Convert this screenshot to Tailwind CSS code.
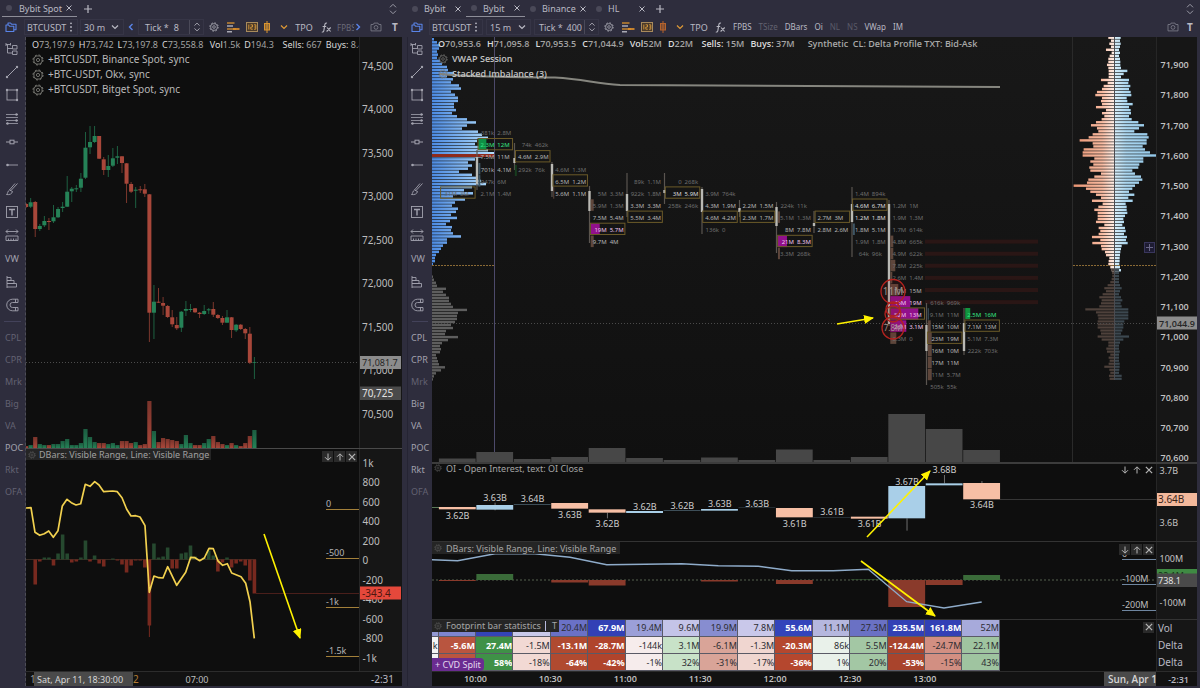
<!DOCTYPE html>
<html lang="en">
<head>
<meta charset="utf-8">
<title>BTCUSDT charts</title>
<script src="https://cdn.jsdelivr.net/npm/@tailwindcss/browser@4"></script>
</head>
<body class="h-screen overflow-hidden bg-[#2e2d3d] font-['Noto_Sans',sans-serif] text-[9px] leading-none text-[#b9b9c3]">

<svg class="absolute size-0" aria-hidden="true">
  <defs>
    <linearGradient id="blueFade" gradientUnits="userSpaceOnUse" x1="432" x2="492" y1="0" y2="0"><stop offset="0" stop-color="#4c8ae2"/><stop offset="1" stop-color="#b2ddfb"/></linearGradient>
    <linearGradient id="orangeFade" gradientUnits="userSpaceOnUse" x1="1074" x2="1114" y1="0" y2="0"><stop offset="0" stop-color="#e89473"/><stop offset="0.7" stop-color="#f8baa0"/><stop offset="1" stop-color="#ffeee6"/></linearGradient>
    <linearGradient id="skyFade" gradientUnits="userSpaceOnUse" x1="1114" x2="1155" y1="0" y2="0"><stop offset="0" stop-color="#daf0fb"/><stop offset="0.3" stop-color="#abd6ef"/><stop offset="1" stop-color="#92c7e8"/></linearGradient>
    <linearGradient id="redVol" x1="0" x2="0" y1="0" y2="1"><stop offset="0" stop-color="#7a342b"/><stop offset="1" stop-color="#a8473a"/></linearGradient>
    <linearGradient id="greenVol" x1="0" x2="0" y1="0" y2="1"><stop offset="0" stop-color="#1c5c40"/><stop offset="1" stop-color="#258257"/></linearGradient>
    <marker id="tip" markerUnits="userSpaceOnUse" markerWidth="10" markerHeight="10" refX="9" refY="4.5" orient="auto"><path d="M0 0L10 4.5L0 9Z" fill="#fff200"/></marker>
    <symbol id="i-folder" viewBox="0 0 12 12"><path d="M1 10.500V4h2.500l1 1.200h4.300v5.300zM3 4V2h2.500l1 1.200H11v5.600H9" fill="none" stroke="currentColor" stroke-width="1.100" stroke-linejoin="round"/></symbol>
    <symbol id="i-dots" viewBox="0 0 4 12"><g fill="currentColor"><circle cx="2" cy="2.300" r=".9"/><circle cx="2" cy="6" r=".9"/><circle cx="2" cy="9.700" r=".9"/></g></symbol>
    <symbol id="i-down" viewBox="0 0 8 8"><path d="M1 2.500l3 3 3-3" fill="none" stroke="currentColor" stroke-width="1.200"/></symbol>
    <symbol id="i-left" viewBox="0 0 8 8"><path d="M5.500 1l-3 3 3 3" fill="none" stroke="currentColor" stroke-width="1.400"/></symbol>
    <symbol id="i-right" viewBox="0 0 8 8"><path d="M2.500 1l3 3-3 3" fill="none" stroke="currentColor" stroke-width="1.400"/></symbol>
    <symbol id="i-spin" viewBox="0 0 8 12"><path d="M1 4.300l3-3 3 3M1 7.700l3 3 3-3" fill="none" stroke="currentColor"/></symbol>
    <symbol id="i-gear" viewBox="0 0 12 12"><circle cx="6" cy="6" r="5" fill="none" stroke="currentColor" stroke-width="1" stroke-dasharray="1.960 1.960"/><circle cx="6" cy="6" r="4.100" fill="none" stroke="currentColor" stroke-width=".8"/><circle cx="6" cy="6" r="1.600" fill="none" stroke="currentColor" stroke-width=".8"/></symbol>
    <symbol id="i-bars" viewBox="0 0 13 11"><path d="M0 1h7.500M0 7h9" stroke="#c2842f" stroke-width="1.700"/><path d="M0 4h6M0 9.800h5" stroke="#a9a9b4" stroke-width="1.500"/><path d="M6 7h6.500" stroke="#e0912c" stroke-width="1.700"/></symbol>
    <symbol id="i-nums" viewBox="0 0 12 10"><rect x=".5" y=".5" width="11" height="9" fill="#4a3a2a" stroke="#a88a5c"/><path d="M2.800 2.500v5M4.600 2.800h1.900v2.200H4.800v2.200h2M8 2.800h1.800v4.400H8M8.300 5h1.500" fill="none" stroke="#d99a3d" stroke-width=".9"/></symbol>
    <symbol id="i-candle" viewBox="0 0 8 12"><path d="M4 0v12" stroke="currentColor"/><rect x="1.500" y="2.500" width="5" height="6.500" fill="currentColor" fill-opacity=".55" stroke="currentColor"/></symbol>
    <symbol id="i-fx" viewBox="0 0 11 11"><path d="M6 1.200C4.200.6 3.900 2 3.600 4L2.900 8.400C2.700 9.800 2 10.300.8 9.900M1.600 4.500h3.600M6 5.500l3.600 4M9.700 5.500L5.600 9.500" fill="none" stroke="currentColor" stroke-width="1.100"/></symbol>
    <symbol id="i-camera" viewBox="0 0 12 10"><path d="M1 2.500h2.300L4 1.100h4l.7 1.400H11v6.400H1z" fill="none" stroke="currentColor" stroke-width=".8"/><circle cx="6" cy="5.400" r="1.900" fill="none" stroke="currentColor" stroke-width=".8"/></symbol>
    <symbol id="i-x" viewBox="0 0 8 8"><path d="M1.500 1.500l5 5M6.500 1.500l-5 5" stroke="currentColor"/></symbol>
    <symbol id="i-plus" viewBox="0 0 10 10"><path d="M5 1v8M1 5h8" stroke="currentColor" stroke-width="1.200"/></symbol>
    <symbol id="i-adown" viewBox="0 0 8 8"><path d="M4 .5v6.500M1 4.200l3 3 3-3" fill="none" stroke="currentColor"/></symbol>
    <symbol id="i-aup" viewBox="0 0 8 8"><path d="M4 7.500V1M1 3.800l3-3 3 3" fill="none" stroke="currentColor"/></symbol>
    <symbol id="t-tree" viewBox="0 0 14 14"><path d="M1 2.500h4.500M2.500 2.500v8.500h4.500M2.500 6.500h4.500M7.500 3.500h4.500v3.500H7.500zM7.500 9h4.500v3.500H7.500zM1 1v3M5.500 1v2.500" fill="none" stroke="currentColor" stroke-width=".9"/></symbol>
    <symbol id="t-line" viewBox="0 0 14 14"><path d="M2 12L12 2" stroke="currentColor"/><circle cx="2" cy="12" r="1.200" fill="currentColor"/><circle cx="12" cy="2" r="1.200" fill="currentColor"/></symbol>
    <symbol id="t-rect" viewBox="0 0 14 14"><rect x="2" y="2" width="10" height="10" fill="none" stroke="currentColor" stroke-width=".9"/><g fill="currentColor"><circle cx="2" cy="2" r="1.200"/><circle cx="12" cy="2" r="1.200"/><circle cx="12" cy="12" r="1.200"/></g></symbol>
    <symbol id="t-levels" viewBox="0 0 14 14"><path d="M1 2.500h12M1 5.500h12M1 8.500h12M1 11.500h12" stroke="currentColor" stroke-width=".8"/><g fill="currentColor"><circle cx="11.500" cy="2.500" r="1.200"/><circle cx="11.500" cy="8.500" r="1.200"/><circle cx="2.500" cy="11.500" r="1.200"/></g></symbol>
    <symbol id="t-node" viewBox="0 0 14 14"><path d="M1 7h4M9 7h4" stroke="currentColor"/><rect x="5" y="5.200" width="4" height="3.600" fill="none" stroke="currentColor"/></symbol>
    <symbol id="t-ray" viewBox="0 0 14 14"><path d="M2 7h11" stroke="currentColor" stroke-width=".9"/><circle cx="2.500" cy="7" r="1.300" fill="currentColor"/></symbol>
    <symbol id="t-brush" viewBox="0 0 14 14"><path d="M12.500 1.500L6 8.500M10 1.500L4.500 8M4.500 8l3 1.500c-.5 2.500-3 3.500-6 3 1.500-1 1-3.500 3-4.500z" fill="none" stroke="currentColor" stroke-width=".9"/></symbol>
    <symbol id="t-text" viewBox="0 0 14 14"><rect x="1.500" y="1.500" width="11" height="11" fill="none" stroke="currentColor" stroke-width=".9"/><path d="M4 4.500h6M7 4.500v6" stroke="currentColor" stroke-width="1.400"/></symbol>
    <symbol id="t-measure" viewBox="0 0 14 14"><path d="M1 3.500h12M3 1.500L1 3.500l2 2M11 1.500l2 2-2 2M1 8h12v4.500H1zM3.500 12.500v-2M6 12.500v-2M8.500 12.500v-2M11 12.500v-2" fill="none" stroke="currentColor" stroke-width=".9"/></symbol>
    <symbol id="t-hist" viewBox="0 0 14 14"><path d="M2 1v12M2 2.500h4v3H2M2 5.500h7v3H2M2 8.500h9.500v3.500H2" fill="none" stroke="currentColor" stroke-width=".9"/></symbol>
    <symbol id="t-magnet" viewBox="0 0 14 14"><path d="M13 1.200H7.500a5.800 5.800 0 0 0 0 11.600H13V9.500H7.500a2.500 2.500 0 0 1 0-5H13zM10.500 1.200v3.300M10.500 9.500v3.300" fill="none" stroke="currentColor" stroke-width=".9"/></symbol>
  </defs>
</svg>

<main class="flex h-full">

  <!-- Spot workspace -->
  <section class="flex w-[34%] min-w-0 flex-col pb-0.5" aria-label="Bybit Spot">
    <nav class="flex h-[17px] shrink-0 items-center pl-0.5 text-[9px]" aria-label="Tabs">
      <div class="flex h-full w-[75px] items-center border-b border-[#8d8d98] pl-1">
        <span class="size-1.5 rounded-full bg-[#4a4958]"></span>
        <button class="ml-[7px] whitespace-nowrap">Bybit Spot</button>
        <button class="ml-auto mr-1" aria-label="Close tab"><svg class="size-2"><use href="#i-x"/></svg></button>
      </div>
      <button class="ml-1.5" aria-label="New tab"><svg class="size-2.5"><use href="#i-plus"/></svg></button>
      <button class="ml-auto mr-[11px] text-[#9a9aa6]" aria-label="Expand"><svg class="h-3 w-2"><use href="#i-spin"/></svg></button>
    </nav>
    <div class="flex h-5 shrink-0 items-center pr-1.5">
      <button class="flex w-[22px] justify-center text-[#5a84e8]" aria-label="Open layout"><svg class="size-3"><use href="#i-folder"/></svg></button>
      <button class="ml-0.5 flex h-4 w-[54px] items-center justify-between border border-[#363546] px-0.5 pr-1">BTCUSDT<svg class="h-3 w-1"><use href="#i-dots"/></svg></button>
      <label class="relative ml-0.5 flex h-4 w-11 items-center border border-[#363546]"><select class="w-full appearance-none bg-transparent pl-[3px] outline-none" aria-label="Interval"><option>30 m</option></select><svg class="pointer-events-none absolute right-1 size-2"><use href="#i-down"/></svg></label>
      <button class="flex w-3.5 justify-center text-[#5a84e8]" aria-label="Scroll left"><svg class="size-2"><use href="#i-left"/></svg></button>
      <div class="flex h-4 w-[66px] items-center border border-[#363546]"><label for="tickA" class="whitespace-nowrap pl-1.5">Tick *</label><input id="tickA" value="8" class="h-full w-0 flex-1 bg-transparent pr-[10px] text-right outline-none"><button class="flex h-full w-3.5 items-center justify-center border-l border-[#4a4958]" aria-label="Step"><svg class="h-2.5 w-2"><use href="#i-spin"/></svg></button></div>
      <button class="flex w-5 justify-center" aria-label="Settings"><svg class="size-2.5"><use href="#i-gear"/></svg></button>
      <button class="flex w-[18px] justify-center" aria-label="Profile"><svg class="h-[11px] w-[13px]"><use href="#i-bars"/></svg></button>
      <button class="flex w-[19px] justify-center" aria-label="Cluster numbers"><svg class="h-2.5 w-3"><use href="#i-nums"/></svg></button>
      <button class="flex w-3 justify-center text-[#d99430]" aria-label="Candles"><svg class="h-3 w-2"><use href="#i-candle"/></svg></button>
      <button class="ml-[3px] flex w-4 justify-center text-[#e09a35]" aria-label="Chart type"><svg class="size-2"><use href="#i-down"/></svg></button>
      <button class="ml-0.5 w-5">TPO</button>
      <button class="ml-[5px] flex w-3.5 justify-center" aria-label="Indicators"><svg class="size-[11px]"><use href="#i-fx"/></svg></button>
      <span class="ml-1 w-0 flex-1 overflow-hidden"><button class="whitespace-nowrap text-[8px] text-[#6a6a78]">FPBS</button></span>
      <button class="flex w-2 justify-center text-[#5a84e8]" aria-label="Scroll right"><svg class="size-2"><use href="#i-right"/></svg></button>
      <button class="ml-1.5 flex w-4 justify-center text-[#80808d]" aria-label="Screenshot"><svg class="h-2.5 w-3"><use href="#i-camera"/></svg></button>
      <button class="ml-1 w-3.5 text-[10px] font-bold">T</button>
    </div>

    <div class="flex min-h-0 flex-1">
      <div class="w-[26px] shrink-0 border-r border-dashed border-[#4d4d56] text-[#a2a2ae]" data-tools="6"></div>
      <div class="flex min-w-0 flex-1 flex-col bg-[#0e0e0e]">
        <div class="flex min-h-0 flex-[411]">
          <div class="relative min-w-0 flex-1 overflow-hidden">
            <svg id="spotPlot" class="absolute inset-0 size-full"></svg>
            <div class="relative pl-1.5 pt-px text-[10px] text-[#b9b9b9]">
              <p class="flex gap-1 whitespace-nowrap text-[9px] leading-[14px]" data-ohlc="O 73,197.9|H 73,742|L 73,197.8|C 73,558.8|&#160;Vol 1.5k|D 194.3|&#160;&#160;Sells: &#160;667|Buys: &#160;8.4k"></p>
              <div class="flex items-center gap-1 leading-[15px]"><button aria-label="Settings"><svg class="size-3 text-[#85857f]"><use href="#i-gear"/></svg></button>+BTCUSDT, Binance Spot, sync</div>
              <div class="flex items-center gap-1 leading-[15px]"><button aria-label="Settings"><svg class="size-3 text-[#85857f]"><use href="#i-gear"/></svg></button>+BTC-USDT, Okx, sync</div>
              <div class="flex items-center gap-1 leading-[15px]"><button aria-label="Settings"><svg class="size-3 text-[#85857f]"><use href="#i-gear"/></svg></button>+BTCUSDT, Bitget Spot, sync</div>
            </div>
          </div>
          <div class="w-[43px] overflow-hidden border-l border-[#262626] bg-[#161616]"><svg id="spotAxis" class="size-full"></svg></div>
        </div>
        <div class="flex min-h-0 flex-[222] border-t border-[#4a4a4a]">
          <div class="relative min-w-0 flex-1 overflow-hidden">
            <svg id="spotDelta" class="absolute inset-0 size-full"></svg>
            <div class="absolute left-0 top-0 flex h-[11px] items-center gap-[3px] bg-[#252525] pl-0.5 pr-0.5 text-[#a0a0a0]"><svg class="size-2 text-[#5c5c5c]"><use href="#i-gear"/></svg>DBars: Visible Range, Line: Visible Range</div>
            <div class="absolute right-0.5 top-0.5 flex gap-px text-[#b5b5b5]" data-panebtns="3"></div>
          </div>
          <div class="w-[43px] overflow-hidden border-l border-[#262626] bg-[#161616]"><svg id="spotDeltaAxis" class="size-full"></svg></div>
        </div>
        <div class="flex h-[15px] shrink-0 border-t border-[#2c2c2c] bg-[#121212]">
          <div class="min-w-0 flex-1"><svg id="spotTime" class="size-full"></svg></div>
          <div class="w-[43px] pr-2 text-right text-[10px] leading-[15px]">-2:31</div>
        </div>
      </div>
      <div class="w-1.5 shrink-0 border-r border-[#252433]"></div>
    </div>
  </section>

  <!-- Futures workspace -->
  <section class="flex min-w-0 flex-1 flex-col pb-0.5" aria-label="Bybit">
    <nav class="flex h-[17px] shrink-0 items-center text-[9px]" aria-label="Tabs">
      <div class="flex h-full w-[58px] items-center pl-1">
        <span class="size-1.5 rounded-full bg-[#4a4958]"></span>
        <button class="ml-1.5">Bybit</button>
        <button class="ml-auto mr-1" aria-label="Close tab"><svg class="size-2"><use href="#i-x"/></svg></button>
      </div>
      <div class="flex h-full w-[59px] items-center border-b border-[#8d8d98] pl-[5px]">
        <span class="size-1.5 rounded-full bg-[#4a4958]"></span>
        <button class="ml-1.5">Bybit</button>
        <button class="ml-auto mr-1" aria-label="Close tab"><svg class="size-2"><use href="#i-x"/></svg></button>
      </div>
      <div class="flex h-full w-[66px] items-center pl-[5px]">
        <span class="size-1.5 rounded-full bg-[#4a4958]"></span>
        <button class="ml-1.5">Binance</button>
        <button class="ml-auto mr-1" aria-label="Close tab"><svg class="size-2"><use href="#i-x"/></svg></button>
      </div>
      <div class="flex h-full w-[55px] items-center pl-[5px]">
        <span class="size-1.5 rounded-full bg-[#4a4958]"></span>
        <button class="ml-1.5">HL</button>
        <button class="ml-auto" aria-label="Close tab"><svg class="size-2"><use href="#i-x"/></svg></button>
      </div>
      <button class="ml-[9px]" aria-label="New tab"><svg class="size-2.5"><use href="#i-plus"/></svg></button>
      <button class="ml-auto mr-1.5 text-[#9a9aa6]" aria-label="Expand"><svg class="h-3 w-2"><use href="#i-spin"/></svg></button>
    </nav>
    <div class="flex h-5 shrink-0 items-center pr-1">
      <button class="flex w-[18px] justify-center text-[#5a84e8]" aria-label="Open layout"><svg class="size-3"><use href="#i-folder"/></svg></button>
      <button class="ml-[3px] flex h-4 w-[54px] items-center justify-between border border-[#363546] px-0.5 pr-1">BTCUSDT<svg class="h-3 w-1"><use href="#i-dots"/></svg></button>
      <label class="relative ml-[3px] flex h-4 w-[45px] items-center border border-[#363546]"><select class="w-full appearance-none bg-transparent pl-[3px] outline-none" aria-label="Interval"><option>15 m</option></select><svg class="pointer-events-none absolute right-1 size-2"><use href="#i-down"/></svg></label>
      <div class="ml-[3px] flex h-4 w-[65px] items-center border border-[#363546]"><label for="tickB" class="whitespace-nowrap pl-1">Tick *</label><input id="tickB" value="400" class="h-full w-0 flex-1 bg-transparent pr-0.5 text-right outline-none"><button class="flex h-full w-3.5 items-center justify-center border-l border-[#4a4958]" aria-label="Step"><svg class="h-2.5 w-2"><use href="#i-spin"/></svg></button></div>
      <button class="flex w-5 justify-center" aria-label="Settings"><svg class="size-2.5"><use href="#i-gear"/></svg></button>
      <button class="flex w-[18px] justify-center" aria-label="Profile"><svg class="h-[11px] w-[13px]"><use href="#i-bars"/></svg></button>
      <button class="flex w-[19px] justify-center" aria-label="Cluster numbers"><svg class="h-2.5 w-3"><use href="#i-nums"/></svg></button>
      <button class="flex w-3.5 justify-center text-[#b5632c]" aria-label="Candles"><svg class="h-3 w-2"><use href="#i-candle"/></svg></button>
      <button class="ml-0.5 flex w-4 justify-center text-[#e09a35]" aria-label="Chart type"><svg class="size-2"><use href="#i-down"/></svg></button>
      <button class="ml-px w-5">TPO</button>
      <button class="ml-1 flex w-3.5 justify-center" aria-label="Indicators"><svg class="size-[11px]"><use href="#i-fx"/></svg></button>
      <div class="ml-1.5 flex flex-1 items-center gap-[7px] whitespace-nowrap text-[8px]">
        <button>FPBS</button><button class="text-[#626270]">TSize</button><button>DBars</button><button>Oi</button><button class="text-[#5a5a68]">NL</button><button class="text-[#5a5a68]">NS</button><button>VWap</button><button>IM</button>
      </div>
      <button class="flex w-4 justify-center text-[#80808d]" aria-label="Screenshot"><svg class="h-2.5 w-3"><use href="#i-camera"/></svg></button>
      <button class="ml-[3px] w-3 text-[10px] font-bold">T</button>
    </div>

    <div class="flex min-h-0 flex-1">
      <div class="w-6 shrink-0 text-[#a2a2ae]" data-tools="7"></div>
      <div class="flex min-w-0 flex-1 flex-col bg-[#0e0e0e] font-['Open_Sans',sans-serif] font-semibold">
        <div class="flex min-h-0 flex-[425] bg-linear-to-b from-[#181818] to-[#101010]">
          <div class="relative min-w-0 flex-1 overflow-hidden">
            <svg id="futPlot" class="absolute inset-0 size-full font-['Noto_Sans',sans-serif] font-normal"></svg>
            <div class="relative pl-1.5 text-[#c4c4c4]">
              <p class="flex gap-1.5 whitespace-nowrap text-[9px] leading-[14px]" data-ohlc="O 70,953.6|H 71,095.8|L 70,953.5|C 71,044.9|Vol 52M|D 22M|&#160;Sells: &#160;15M|Buys: &#160;37M|&#160; &#160;Synthetic&#160; CL: Delta Profile TXT: Bid-Ask"></p>
              <div class="flex items-center gap-1 leading-[15px]"><button aria-label="Settings"><svg class="size-2.5 text-[#7c7c78]"><use href="#i-gear"/></svg></button>VWAP Session</div>
              <div class="flex items-center gap-1 leading-[15px]"><button aria-label="Settings"><svg class="size-2.5 text-[#7c7c78]"><use href="#i-gear"/></svg></button>Stacked Imbalance (3)</div>
            </div>
          </div>
          <div class="relative w-[84px] shrink-0 border-l border-[#2a2a2a]">
            <svg id="futProfile" class="absolute inset-0 size-full"></svg>
          </div>
          <div class="w-[41px] overflow-hidden border-l border-[#262626] bg-[#161616]"><svg id="futAxis" class="size-full"></svg></div>
        </div>
        <div class="flex min-h-0 flex-[77] border-t-2 border-[#3c3c3c] font-['Noto_Sans',sans-serif] font-normal">
          <div class="relative min-w-0 flex-1 overflow-hidden">
            <svg id="oiPlot" class="absolute inset-0 size-full"></svg>
            <div class="absolute left-0 top-0 flex h-2 items-center gap-1 pl-0.5 text-[#a5a5a5]"><svg class="size-2 text-[#5c5c5c]"><use href="#i-gear"/></svg>OI - Open Interest, text: OI Close</div>
            <div class="absolute right-0.5 top-0 flex gap-px text-[#b5b5b5]" data-panebtns="3" data-plain></div>
          </div>
          <div class="w-[41px] overflow-hidden border-l border-[#262626] bg-[#161616]"><svg id="oiAxis" class="size-full"></svg></div>
        </div>
        <div class="flex min-h-0 flex-[76] border-t border-[#333] font-['Noto_Sans',sans-serif] font-normal">
          <div class="relative min-w-0 flex-1 overflow-hidden">
            <svg id="deltaPlot" class="absolute inset-0 size-full"></svg>
            <div class="absolute left-0 top-0 flex h-3 items-center gap-1 bg-[#252525] pl-0.5 pr-1 text-[#a5a5a5]"><svg class="size-2 text-[#5c5c5c]"><use href="#i-gear"/></svg>DBars: Visible Range, Line: Visible Range</div>
            <div class="absolute right-0.5 top-0.5 flex gap-px text-[#b5b5b5]" data-panebtns="3"></div>
          </div>
          <div class="w-[41px] overflow-hidden border-l border-[#262626] bg-[#161616]"><svg id="deltaAxis" class="size-full"></svg></div>
        </div>
        <div class="flex shrink-0 border-t border-[#333] font-['Noto_Sans',sans-serif] font-normal">
          <div class="relative min-w-0 flex-1 overflow-hidden">
            <table id="stats" class="w-[568px] table-fixed border-collapse text-right" aria-label="Footprint bar statistics"></table>
            <div class="absolute left-0 top-0 flex h-3 items-center gap-1 bg-[#252525] pl-0.5 text-[#a5a5a5]"><svg class="size-2 text-[#5c5c5c]"><use href="#i-gear"/></svg>Footprint bar statistics<span class="h-2.5 w-px bg-[#b9b9dd]"></span><button class="px-0.5">T</button></div>
            <button class="absolute bottom-0 left-0 h-[13px] rounded-r-sm bg-[#6a2c91] px-[3px] text-[#e4d9ee]">+ CVD Split</button>
            <div class="absolute right-0.5 top-0.5 flex text-[#b5b5b5]" data-panebtns="1"></div>
          </div>
          <div class="flex w-[41px] flex-col justify-around border-l border-[#262626] bg-[#161616] pl-px text-[10px]"><span>Vol</span><span>Delta</span><span>Delta</span></div>
        </div>
        <div class="flex h-[15px] shrink-0 border-t border-[#2c2c2c] bg-[#121212]">
          <div class="relative min-w-0 flex-1 overflow-hidden"><svg id="futTime" class="absolute inset-0 size-full"></svg><span class="absolute right-0 top-0 h-full w-[52px] overflow-hidden whitespace-nowrap bg-[#4a4a4a] pl-1 text-[10px] leading-[14px] text-[#d5d5d5]">Sun, Apr 1</span></div>
          <div class="w-[41px] pr-2 text-right leading-[15px]">-2:31</div>
        </div>
      </div>
      <div class="w-[3px] shrink-0"></div>
    </div>
  </section>
</main>

<script>
const $ = id => document.getElementById(id);
const rect = (x, y, w, h, fill, more = '') => `<rect x="${x}" y="${y}" width="${w}" height="${h}" fill="${fill}" ${more}/>`;
const line = (x1, y1, x2, y2, stroke, more = '') => `<line x1="${x1}" y1="${y1}" x2="${x2}" y2="${y2}" stroke="${stroke}" ${more}/>`;
const text = (x, y, s, fill, size = 9, more = '') => `<text x="${x}" y="${y}" fill="${fill}" font-size="${size}" ${more}>${s}</text>`;
const arrow = (x1, y1, x2, y2) => line(x1, y1, x2, y2, '#fff200', 'stroke-width="1.6" marker-end="url(#tip)"');
const tag = (x, y, w, h, bg, s, fill, size = 9) => rect(x, y, w, h, bg) + text(x + 3, y + h / 2 + 3.500, s, fill, size);
// Every plot is drawn in workspace coordinates; ox/oy is the pane's origin.
const put = (id, ox, oy, body) => { $(id).innerHTML = `<g transform="translate(${-ox} ${-oy})">${body}</g>`; };
const MID = 'text-anchor="middle"';

/* Drawing tools */
const tools = ['tree:Objects', 'line:Line', 'rect:Rectangle', 'levels:Levels', 'node:Segment', 'ray:Ray', 'brush:Brush', 'text:Text', 'measure:Measure', 'VW', 'hist:Profile', 'magnet:Magnet'];
const marks = ['CPL', 'CPR', 'Mrk', 'Big', 'VA', 'POC', 'Rkt', 'OFA'];
document.querySelectorAll('[data-tools]').forEach(host => {
  const spot = host.dataset.tools === '6';
  const on = spot ? ['POC'] : ['CPL', 'CPR', 'Big', 'VA', 'POC', 'Rkt'];
  host.innerHTML = '<div class="flex h-[280px] flex-col">' + tools.map(t => {
    const [icon, name] = t.split(':');
    return name
      ? `<button class="flex w-full flex-1 items-center justify-center ${spot ? 'pr-0.5' : 'pr-1.5'}" aria-label="${name}"><svg class="size-3.5"><use href="#t-${icon}"/></svg></button>`
      : `<button class="w-full flex-1 text-left text-[9px] ${spot ? 'pl-[5px]' : 'pl-[3px]'}">${t}</button>`;
  }).join('') + '</div><div class="mx-1 mb-1 mt-1 h-px bg-[#43425a]"></div>' +
  marks.map(m => `<button class="block h-[22px] w-full text-left text-[9px] ${spot ? 'pl-[5px]' : 'pl-[3px]'} ${on.includes(m) ? '' : 'text-[#636272]'}">${m}</button>`).join('');
});
document.querySelectorAll('[data-panebtns]').forEach(host => {
  const list = host.dataset.panebtns === '1' ? [['x', 'Close']] : [['adown', 'Move down'], ['aup', 'Move up'], ['x', 'Close']];
  const bg = 'plain' in host.dataset ? '' : 'bg-[#2a2a2a]';
  host.innerHTML = list.map(([i, n]) => `<button class="flex size-[11px] items-center justify-center ${bg}" aria-label="${n}"><svg class="${i === 'x' ? 'size-2.5' : 'size-2'}"><use href="#i-${i}"/></svg></button>`).join('');
});
document.querySelectorAll('[data-ohlc]').forEach(p => {
  p.innerHTML = p.dataset.ohlc.split('|').map(part => {
    const cut = part.lastIndexOf(' ');
    const value = part.slice(cut + 1);
    return value === 'Bid-Ask' ? `<span class="text-[#a9a9a9]">${part}</span>` : `<span><span class="text-[#dadada]">${part.slice(0, cut)}</span><span class="text-[#a3a3a3]">${value}</span></span>`;
  }).join('');
});

/* Spot candles: [colour, high, top, bottom, low] */
const R = '#a8473a', G = '#258257';
const candles = [
['r',203,204,207,208],['g',198,202.300,206.700,208],['r',201,202,229,237],['g',224,226,229,231],['g',216,221,225.300,227],['r',218,221,222,230],['g',205,217.300,221.300,223],['g',207,209,217.300,218],['g',202,206.700,208,212],['g',176,191.700,206.700,207],['g',187,188.700,191.300,202],['g',185,188.300,189.300,192],['g',173,178.700,187.700,192],['g',132,147.700,177.700,179],['g',126,142,147.300,154],['g',126,136,142,143],['r',136,136,158.700,159],['r',157,159.300,170,175],['g',155,166,170,177],['g',148,158.300,165.700,167],['g',146,156.300,157.700,164],['r',156,156.300,163,173],['r',163,163.300,183.700,203],['r',182,184,191.700,193],['g',187,189.700,190.700,208],['r',186,189.300,190.300,193],['r',184,189.300,193.700,197],['r',194,194.300,312.700,342],['g',285,301.700,312.700,339],['r',288,301.700,302.700,303],['r',297,303,305.700,315],['r',305,306,317,318],['r',310,317.300,324.300,327],['r',317,325,328.300,330],['g',311,311.700,327.700,332],['g',301,309,310.700,316],['g',304,309,310,312],['r',308,308.300,312.300,313],['r',312,312.700,314,318],['g',305,311,314,315],['g',308,309.300,310.300,314],['r',302,309,314.700,317],['r',314,315,318,319],['r',316,318,322.700,325],['g',310,317.300,322.700,323],['r',317,317.300,330,338],['g',324,324.700,330.300,332],['r',324,324.700,329,330],['r',328,329,333.300,339],['r',327,333.700,362.700,364],['g',357,362,362.700,379]];
const step = 4.566, cx = i => 26.100 + step * i;
const vol = [2,3,11,4,3,3,4,4,7,9,3,3,5,19,11,6,5,5,4,5,3,7,7,5,6,3,4,47,17,6,10,9,8,7,4,13,5,3,3,5,9,12,6,4,3,5,3,2,5,12,18];
let s = line(26, 362.500, 359, 362.500, '#4c4c4c', 'stroke-dasharray="1 2"');
candles.forEach(([c, h, t, b, l], i) => {
  const x = cx(i), col = c === 'r' ? R : G;
  s += line(x, h, x, l, col, 'stroke-width=".9" opacity=".8"') + rect(x - 2, t, 4, b - t, col);
  s += rect(x - 2.100, 448 - vol[i], 4.200, vol[i], c === 'r' ? 'url(#redVol)' : 'url(#greenVol)');
});
put('spotPlot', 26, 37, s);

const ax = '#bdbdbd';
s = '';
for (let k = 0; k < 9; k++) s += text(362, 69.500 + 43.500 * k, (74500 - 500 * k).toLocaleString('en-US'), ax, 10);
s += tag(359, 356, 42, 13, '#8c8c8c', '71,081.7', '#262626') + tag(359, 386.500, 42, 13.500, '#4a4a4a', '70,725', '#e2e2e2', 10);
put('spotAxis', 360, 37, s);

const dl = { 3:-25,4:-2,5:2,6:2,7:-6,8:6,9:25,10:6,11:-3,12:-2,13:2,14:19,15:-2,16:4,17:-4,18:-7,20:1,21:-1,22:-5,23:-13,24:-6,25:-1,26:-1,27:-8,28:-66,29:16,30:2,31:3,32:12,33:-9,34:-9,35:6,36:7,37:14,38:3,39:-1,40:2,41:9,42:4,43:-12,44:-3,45:2,46:-8,47:-4,48:-2,49:-6,50:-21,51:-34 };
s = line(26, 559.500, 256, 559.500, '#3a2a22') + line(256, 593.500, 359, 593.500, '#4a1f1b');
for (const k in dl) {
  const i = k - 1, v = dl[k], x = cx(i);
  s += rect(x - 1.800, v > 0 ? 559.500 - v : 559.500, 3.600, Math.abs(v), v > 0 ? '#26492f' : '#77291f');
}
s += line(cx(27), 625, cx(27), 637, '#77291f');
const pts = [78,204,93,203,105,277,119,286,133,281,146,273,160,292,174,272,187,198,201,178,214,188,228,195,242,191,256,133,270,139,284,125,297,135,311,155,338,153,352,155,366,173,380,208,393,228,407,227,420,231,435,257,448,457,462,408,476,413,489,414,503,380,530,436,557,397,572,352,585,353,599,362,613,354,627,325,640,326,654,363,668,376,682,371,695,399,723,410,737,430,750,485,763,595];
const poly = (p, dx, dy) => p.map((v, i) => (v / 3 + (i % 2 ? dy : dx)).toFixed(1)).join(' ');
s += `<polyline points="${poly(pts, 0, 440)}" fill="none" stroke="#f2d14f" stroke-width="1.7" stroke-linejoin="round"/>`;
[['0', 509.500], ['-500', 558.500], ['-1k', 607.500], ['-1.5k', 656.500]].forEach(([t, y]) => { s += line(326, y, 359, y, '#a3803a') + text(326, y - 2.500, t, '#b5b5b5', 9); });
s += arrow(264, 534, 300, 638);
put('spotDelta', 26, 449, s);
s = '';
['1k', 800, 600, 400, 200, 0, -200, -400, -600, -800, '-1k'].forEach((t, k) => { s += text(362.500, 466.500 + 19.500 * k, t, ax, 10); });
s += tag(359, 586.500, 42, 13, '#e5483b', '-343.4', '#4d1510', 10);
put('spotDeltaAxis', 360, 449, s);
put('spotTime', 26, 672, text(30, 683, '1', '#999', 10) + text(133, 683, '2', '#b57d34', 10) + rect(34, 672, 99, 14, '#4a4a4a') + text(37, 683, 'Sat, Apr 11, 18:30:00', '#d5d5d5', 9) + text(197, 683, '07:00', '#bdbdbd', 9, MID));

/* Futures columns */
const W = 37.450, col = c => 438.900 + W * c;
const rowY = r => 132.700 + 12.100 * r;
const blue = [2,5,8,7,5,6,5,8,10,15,16,22,15,21,19,27,29,19,23,26,26,22,22,24,20,25,35,44,35,30,46,50,56,45,43,48,56,62,50,43,36,40,36,27,40,45,49,54,40,32,41,21,33,23,20,26,24,19,25,18,14,20,19,21,29,15,15,11,9,7,4,3,3,1];
const greyP = [1,2,4,5,14,11,14,17,17,19,21,35,26,25,25,23,19,21,14,13,26,16,10,8,9,8,4,5,6,7,13,9,4,2,1];
s = '';
const bs = 228 / blue.length;
blue.forEach((v, i) => { s += rect(432, (38 + bs * i).toFixed(2), v, 2.500, 'url(#blueFade)'); });
s += rect(432, 154, 62, 3, '#8e2a1c');
greyP.forEach((v, i) => { s += rect(432, (275.500 + 3.020 * i).toFixed(2), v, 2.400, '#5e5e5e'); });
s += line(494.500, 37, 494.500, 462, '#4d4a6b') + line(432, 265.500, 494, 265.500, '#8a6a35', 'stroke-dasharray="2 1"') + line(432, 323.500, 1072, 323.500, '#4a4a4a', 'stroke-dasharray="1 2"');
s += '<path d="M440 74C470 77 500 77 555 77.500C585 79 595 84 620 85C700 86 800 87 1000 87" fill="none" stroke="#86867f" stroke-width="2"/>';
[3.500,10,3,5,14,4,2,4.500,2,12.500,2,5,48,33,12].forEach((h, c) => { s += rect(col(c), 462 - h, W - .7, h, '#474747'); });
for (let r = 9; r < 15; r++) s += rect(925, rowY(r) - 2, 113, 4, '#2a1615');
/* bar bodies: [x, wickTop, top, bottom, wickBottom] */
[[477,150,157,184,190],[514.500,143,158,163,170],[552,162,164,191,197],[589.500,186,191,211,243],[627,173,194,211,217],[664.500,173,190,193,204],[702,187,189,212,234],[739.500,200,208,212,217],[776.500,202,207,226,253],[814,211,223,226,233],[852,187,204,222,257],[889,200,204,324,326],[926.500,303,325,351,385],[964,308,323,351,355]].forEach(([x, a, t, b, z]) => {
  s += line(x, a, x, z, '#5a5550', 'stroke-width="1.2"') + rect(x - 1.200, t, 2.400, b - t, '#b9b9b4');
});
/* delta profile stubs: [col, row, width, colour] */
[[4,6,3],[4,9,3],[9,7,2],[9,10,2],[3,5,1],[12,9,3],[12,10,3],[12,11,5],[12,12,2],[12,13,8],[12,17,6],[13,16,3],[13,17,4],[13,18,4],[13,19,4],[13,20,4]].forEach(([c, r, w]) => { s += rect(col(c) + 2, rowY(r) - 6, w, 11.500, '#5e463b'); });
[[1,3,2],[1,4,2],[11,8,2],[13,15,1]].forEach(([c, r, w]) => { s += rect(col(c) + 2, rowY(r) - 6, w, 11.500, '#3e5563'); });
[[4,8,9],[9,9,9],[12,14,20],[12,15,28],[12,16,16]].forEach(([c, r, w]) => { s += rect(col(c) + 2, rowY(r) - 6, w, 11.500, '#92108c'); });
s += rect(col(1) + 2, 139, 8, 11, '#0f8f45') + rect(col(14) + 2, 308, 5, 11, '#12943f') + rect(col(2) + 1, 165, 2, 11, '#173d1f');
/* cells: column, row, bid, ask, tone (d dim, m mid, b bright, g green, p pink), x boxed */
const tone = { d: '#6e6e6e', m: '#b4b4b4', b: '#dcdcdc', g: '#36e685', p: '#f0c6ef' };
`1 0 381k 2.8M d|1 1 2.3M 12M gx|1 2 7.5M 11M m|1 3 701k 4.1M m|1 4 947k 6M d|1 5 2.1M 1.4M d|0 5 31M 3M dx|2 1 74k 462k d|2 2 4.6M 2.9M mx|2 3 292k 76k d|3 3 4.6M 1.3M d|3 4 6.5M 1.2M mx|3 5 5.6M 1.1M m|4 5 5M 3.3M d|4 6 5.9M 1.3M d|4 7 7.5M 5.4M m|4 8 19M 5.7M px|4 9 9.7M 4M m|5 4 89k 1.1M d|5 5 922k 1.8M d|5 6 3.3M 3.3M m|5 7 5.5M 3.4M mx|6 4 0 268k d|6 5 3M 5.9M bx|6 6 258k 246k d|7 5 3.9M 764k d|7 6 4.3M 1.9M m|7 7 4.6M 4.2M mx|7 8 136k 0 d|8 6 2.2M 1.5M m|8 7 2.3M 1.7M mx|9 6 224k 11k d|9 7 5.1M 1.3M d|9 8 8M 7.8M m|9 9 21M 8.3M px|9 10 3.3M 268k d|10 7 2.7M 3M mx|10 8 2.8M 2.6M m|11 5 1.4M 894k d|11 6 4.6M 6.7M bx|11 7 1.2M 1.8M b|11 8 1.8M 5.1M m|11 9 1.9M 1.8M d|11 10 64k 96k d|12 6 1.2M 1M d|12 7 1.9M 1.3M d|12 8 1.7M 614k d|12 9 4.8M 665k d|12 10 4.9M 622k d|12 11 7.8M 225k d|12 12 2.6M 1.4M d|12 13 11M 15M m|12 14 45M 19M p|12 15 52M 13M px|12 16 26M 3.1M p|12 17 8.3M 0 d|13 14 616k 969k d|13 15 9.1M 11M d|13 16 15M 10M m|13 17 23M 19M mx|13 18 16M 10M m|13 19 17M 11M m|13 20 11M 5.7M d|13 21 505k 55k d|14 15 2.5M 16M g|14 16 7.1M 13M mx|14 17 5.1M 7.3M d|14 18 222k 703k d`.split('|').forEach(row => {
  const [c, r, a, b, k] = row.split(' '), x = col(+c), y = rowY(+r), f = tone[k[0]];
  if (k[1]) s += rect(x + 1.700, y - 6.300, 34.500, 11.300, 'none', 'stroke="#6b5a28" stroke-width="1"');
  s += text(x + 18, y + 2.500, a, f, 6, 'text-anchor="end"') + text(x + 21, y + 2.500, b, f, 6);
});
[[893,291.500,12],[893,309,7],[893,314,8],[893,328,11]].forEach(([x, y, r]) => { s += `<circle cx="${x}" cy="${y}" r="${r}" fill="#8a1a1a" fill-opacity=".12" stroke="#b3231f" stroke-width="1.3"/>`; });
s += text(893, 295, '11M', '#a0938c', 10, MID) + text(893, 331, '7.8M', '#a0938c', 8, MID) + arrow(837, 324, 873, 318);
put('futPlot', 432, 37, s);

/* Two-sided profile, lengths in thirds of a pixel: left, right */
const prof = [18,17,10,15,15,17,10,15,25,12,8,15,14,12,18,15,18,16,22,16,18,18,17,37,17,26,17,18,40,42,20,40,32,46,37,42,52,47,57,49,37,35,40,37,37,53,55,42,25,47,37,48,30,42,38,50,55,70,70,87,52,72,48,58,65,97,77,101,104,95,65,95,63,83,92,90,95,105,95,124,60,85,72,85,63,73,75,70,72,52,40,60,60,78,78,82,82,72,122,60,85,52,72,42,55,58,40,40,67,53,35,32,48,35,60,35,50,37,50,30,50,25,55,27,30,22,47,30,42,32,47,27,67,36,42,33,66,38,40,20,38,18,28,16,25,15,15,14,17,14,18,13,12,15,8,18];
const dark = [8,12,7,12,6,12,8,12,12,12,20,15,30,20,25,15,35,12,45,18,38,22,40,17,45,20,87,40,55,40,50,40,48,40,50,28,50,25,50,25,42,22,40,18,50,42,38,25,18,15,18,12,24,12,22,14,12,12,17,12,14,12,17,14,30,14,15,13,12,12,16,20,14,20];
s = '';
for (let i = 0; i < prof.length; i += 2) {
  const y = (36.500 + 3.020 * i / 2).toFixed(2), l = prof[i] / 3, r = prof[i + 1] / 3;
  s += rect(1114.300 - l, y, l, 2.400, 'url(#orangeFade)') + rect(1115, y, r, 2.400, 'url(#skyFade)');
}
for (let i = 0; i < dark.length; i += 2) {
  const y = (269 + 3.020 * i / 2).toFixed(2), l = dark[i] / 3, r = dark[i + 1] / 3;
  s += rect(1114.300 - l, y, l, 2.200, '#4e413b') + rect(1115, y, r, 2.200, '#3c4850');
}
s += line(1114.500, 37, 1114.500, 380, '#4b4b50') + line(1073, 265.500, 1156, 265.500, '#8a6a35', 'stroke-dasharray="2 1"') + line(1073, 323.500, 1156, 323.500, '#4a4a4a', 'stroke-dasharray="1 2"');
s += rect(1144.500, 242.500, 10, 10, '#1e1c33', 'stroke="#39365c"') + line(1146, 247.500, 1153, 247.500, '#6a6788') + line(1149.500, 244, 1149.500, 251, '#6a6788');
put('futProfile', 1073, 37, s);

s = '';
for (let k = 0; k < 14; k++) s += text(1159.500, 68 + 30.250 * k, (71900 - 100 * k).toLocaleString('en-US'), '#c4c4c4', 9);
s += tag(1155, 316.500, 42, 13, '#8c8c8c', '71,044.9', '#262626');
put('futAxis', 1156, 37, s);

/* Open interest: [up, top, bottom, wickTop, wickBottom, label, labelY] in thirds from y=455 */
s = line(1000, 499.500, 1156, 499.500, '#363636') + line(432, 507.500, 439, 507.500, '#5b7a58');
[[0,156,163,0,0,'3.62B',182],[1,150,164,143,166,'3.63B',127],[1,147,149,0,0,'3.64B',131],[0,144,161,0,0,'3.63B',178],[0,163,173,0,190,'3.62B',207],[1,168,174,0,0,'3.62B',154],[1,165,167,0,0,'3.62B',152],[1,162,167,0,0,'3.63B',145],[1,157,158,0,0,'3.63B',145],[0,159,187,0,0,'3.61B',205],[1,186,187,0,0,'3.61B',171],[0,185,191,0,0,'3.61B',206],[1,93,190,0,227,'3.67B',79],[1,85,91,60,0,'3.68B',43],[0,84,133,78,0,'3.64B',150]].forEach(([up, t, b, wt, wb, lab, ly], c) => {
  const m = col(c) + W / 2, Y = v => 455 + v / 3;
  if (wt || wb) s += line(m, Y(wt || b), m, Y(wb || t), '#6e6e6e');
  s += rect(col(c), Y(t), W - .6, (b - t) / 3, b - t < 3 ? '#56707f' : up ? '#a9cfe8' : '#f7bfa5') + text(m, Y(ly) + 3.300, lab, '#cfcfcf', 9, MID);
});
s += arrow(867, 537, 930, 471);
put('oiPlot', 432, 464, s);
put('oiAxis', 1157, 464, text(1159.500, 474, '3.7B', '#c4c4c4') + text(1159.500, 526, '3.6B', '#c4c4c4') + tag(1155, 493, 42, 13, '#f4b99c', '3.64B', '#3a241a', 10));

/* Delta bars */
s = line(432, 580, 1156, 580, '#55604f', 'stroke-dasharray="2 2"');
[-1,6,0,-2.500,-5.500,0,0,-1.500,0,-4,0,.5,-27,-5,5].forEach((v, c) => { if (v) s += rect(col(c), v > 0 ? 580 - v : 580, W - .6, Math.abs(v), v > 0 ? '#3a6b39' : '#8a3a2b'); });
const dpts = [81,314,158,317,270,296,390,296,495,307,605,329,720,328,830,326,940,332,1060,334,1160,347,1285,347,1390,343,1505,440,1617,459,1730,441];
s += `<polyline points="${poly(dpts, 405, 455)}" fill="none" stroke="#8facca" stroke-width="1.4"/>`;
s += line(1122, 559.500, 1156, 559.500, '#6f86a0') + line(1122, 584.500, 1156, 584.500, '#6f86a0') + line(1122, 610.500, 1156, 610.500, '#6f86a0');
s += text(1122, 557, '0', '#bdbdbd') + text(1122, 582, '-100M', '#bdbdbd') + text(1122, 608, '-200M', '#bdbdbd') + arrow(861, 561, 935, 616);
put('deltaPlot', 432, 542, s);
put('deltaAxis', 1157, 542, text(1159.500, 562, '100M', '#c4c4c4') + text(1159.500, 606, '-100M', '#c4c4c4') + tag(1155, 569, 42, 13, '#3f8a43', '22.1M', '#153317') + tag(1155, 573.500, 42, 13.500, '#4a4a4a', '738.1', '#e2e2e2'));

s = '';
['10:00', '10:30', '11:00', '11:30', '12:00', '12:30', '13:00'].forEach((t, k) => { s += text(475.500 + 74.900 * k, 682, t, '#c4c4c4', 9, MID); });
put('futTime', 432, 672, s);

/* Bar statistics: value, background; trailing ! marks a strong cell */
const stats = [
  ['Vol', ' #9297d2', ' #7d85cf', ' #3444b8', ' #c9c9ea', '20.4M #6a71c6', '67.9M #3240b5!', '19.4M #9b9fd8', '9.6M #c4c4e8', '19.9M #878dd0', '7.8M #c9c8ea', '55.6M #3344bb!', '11.1M #b5b7de', '27.3M #6a71c4', '235.5M #3240b5!', '161.8M #3240b5!', '52M #a7aadb'],
  ['Delta', 'k #f4f4f4', '-5.6M #b9553f!', '27.4M #3f9147!', '-1.5M #f2d9d4', '-13.1M #b04a30!', '-28.7M #b0442c!', '-144k #f6ecec', '3.1M #c8e2c8', '-6.1M #d9a498', '-1.3M #f0d6d0', '-20.3M #b5472e!', '86k #e9f1ea', '5.5M #a3c7a4', '-124.4M #a9442c!', '-24.7M #d28f82', '22.1M #9fc4a0'],
  ['Delta %', ' #f4f4f4', ' #b9553f', '58% #3f9147!', '-18% #f2d9d4', '-64% #b04a30!', '-42% #b0442c!', '-1% #f6ecec', '32% #c8e2c8', '-31% #d9a498', '-17% #f0d6d0', '-36% #b5472e!', '1% #e9f1ea', '20% #a3c7a4', '-53% #a9442c!', '-15% #d28f82', '43% #9fc4a0']
];
$('stats').innerHTML = '<colgroup><col class="w-[6px]"></colgroup><tbody>' + stats.map(([name, ...cells]) =>
  `<tr aria-label="${name}">` + cells.map(c => {
    const [v, bg] = c.split(' '), strong = bg.endsWith('!');
    return `<td class="h-[17px] overflow-hidden whitespace-nowrap border border-l-0 border-t-0 border-[#5a5a66] p-0 ${strong ? 'font-bold text-white' : 'text-[#2d2d33]'}" style="background:${bg.replace('!', '')}">${v}</td>`;
  }).join('') + '</tr>').join('') + '</tbody>';
</script>
</body>
</html>
